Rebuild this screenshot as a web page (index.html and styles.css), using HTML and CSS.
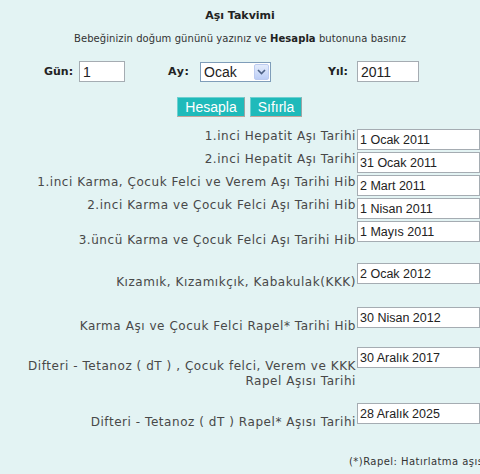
FILE: index.html
```html
<!DOCTYPE html>
<html lang="tr">
<head>
<meta charset="utf-8">
<title>Aşı Takvimi</title>
<link rel="stylesheet" href="styles.css">
</head>
<body>
<div class="page">
  <h1 class="title">Aşı Takvimi</h1>
  <p class="intro">Bebeğinizin doğum gününü yazınız ve <b>Hesapla</b> butonuna basınız</p>

  <div class="fields">
    <label class="field f-gun"><span class="flabel">Gün:</span><input class="txt in-gun" type="text" value="1"></label>
    <label class="field f-ay"><span class="flabel">Ay:</span>
      <span class="selwrap">
        <select class="sel"><option>Ocak</option><option>Şubat</option><option>Mart</option></select>
        <span class="selbtn"><svg width="9" height="6" viewBox="0 0 9 6"><path d="M1 1 L4.5 4.5 L8 1" fill="none" stroke="#4d6185" stroke-width="1.6"/></svg></span>
      </span>
    </label>
    <label class="field f-yil"><span class="flabel">Yıl:</span><input class="txt in-yil" type="text" value="2011"></label>
  </div>

  <div class="buttons">
    <button class="btn btn-h" type="button">Hesapla</button>
    <button class="btn btn-s" type="button">Sıfırla</button>
  </div>

  <div class="results">
    <div class="row r-short"><div class="lbl">1.inci Hepatit Aşı Tarihi</div><input class="out" type="text" value="1 Ocak 2011"></div>
    <div class="row r-short"><div class="lbl">2.inci Hepatit Aşı Tarihi</div><input class="out" type="text" value="31 Ocak 2011"></div>
    <div class="row r-short"><div class="lbl">1.inci Karma, Çocuk Felci ve Verem Aşı Tarihi Hib</div><input class="out" type="text" value="2 Mart 2011"></div>
    <div class="row r-short"><div class="lbl">2.inci Karma ve Çocuk Felci Aşı Tarihi Hib</div><input class="out" type="text" value="1 Nisan 2011"></div>
    <div class="row r-tall h42"><div class="lbl">3.üncü Karma ve Çocuk Felci Aşı Tarihi Hib</div><input class="out" type="text" value="1 Mayıs 2011"></div>
    <div class="row r-tall h44"><div class="lbl">Kızamık, Kızamıkçık, Kabakulak(KKK)</div><input class="out" type="text" value="2 Ocak 2012"></div>
    <div class="row r-tall h40"><div class="lbl">Karma Aşı ve Çocuk Felci Rapel* Tarihi Hib</div><input class="out" type="text" value="30 Nisan 2012"></div>
    <div class="row r-tall h56"><div class="lbl">Difteri - Tetanoz ( dT ) , Çocuk felci, Verem ve KKK<br>Rapel Aşısı Tarihi</div><input class="out" type="text" value="30 Aralık 2017"></div>
    <div class="row r-tall h44"><div class="lbl">Difteri - Tetanoz ( dT ) Rapel* Aşısı Tarihi</div><input class="out" type="text" value="28 Aralık 2025"></div>
  </div>

  <p class="note">(*)Rapel: Hatırlatma aşısı</p>
</div>
</body>
</html>
```

FILE: styles.css
```css
html, body {
  margin: 0;
  padding: 0;
  background: #e3f3f3;
}
body {
  font-family: "DejaVu Sans", Verdana, sans-serif;
  color: #333;
  overflow: hidden;
}
.page {
  width: 480px;
  height: 474px;
  box-sizing: border-box;
  padding-top: 9px;
}
.title {
  margin: 0;
  font-size: 11px;
  line-height: 14px;
  font-weight: bold;
  text-align: center;
  color: #222;
}
.intro {
  margin: 9px 0 0;
  font-size: 10px;
  line-height: 14px;
  text-align: center;
  color: #333;
  letter-spacing: 0.07px;
}
.intro b { color: #222; }
.fields {
  display: flex;
  align-items: center;
  margin-top: 15px;
  height: 21px;
}
.field {
  display: flex;
  align-items: center;
}
.flabel {
  font-size: 11px;
  font-weight: bold;
  color: #222;
  white-space: nowrap;
}
.f-gun { margin-left: 44px; }
.f-gun .flabel { width: 35px; }
.f-ay { margin-left: 43px; }
.f-ay .flabel { width: 32px; letter-spacing: 0.6px; }
.f-yil { margin-left: 57px; }
.f-yil .flabel { width: 29px; }
.txt {
  box-sizing: border-box;
  height: 21px;
  border: 1px solid #a5acb2;
  background: #fff;
  font-family: "Liberation Sans", Arial, sans-serif;
  font-size: 14px;
  color: #222;
  padding: 0 3px;
  margin: 0;
}
.in-gun { width: 46px; }
.in-yil { width: 62px; }
.selwrap {
  position: relative;
  display: inline-block;
  width: 71px;
  height: 20px;
}
.sel {
  appearance: none;
  -webkit-appearance: none;
  box-sizing: border-box;
  width: 71px;
  height: 20px;
  border: 1px solid #7f9db9;
  background: #fff;
  font-family: "Liberation Sans", Arial, sans-serif;
  font-size: 14px;
  color: #222;
  padding: 0 3px;
  margin: 0;
  border-radius: 0;
}
.selbtn {
  position: absolute;
  right: 2px;
  top: 2px;
  width: 15px;
  height: 16px;
  box-sizing: border-box;
  background: linear-gradient(#e4ecfc, #bccef6);
  border: 1px solid #bccbf0;
  border-radius: 2px;
  display: flex;
  align-items: center;
  justify-content: center;
}
.buttons {
  display: flex;
  justify-content: flex-start;
  gap: 5px;
  margin-top: 15px;
  padding-left: 177px;
}
.btn {
  box-sizing: border-box;
  height: 20px;
  margin: 0;
  padding: 0;
  background: #1fbaba;
  color: #fff;
  font-family: "Liberation Sans", Arial, sans-serif;
  font-size: 14px;
  line-height: 18px;
  border: 1px solid #1fbaba;
  border-top-color: #6fd0d0;
  border-left-color: #6fd0d0;
  border-right-color: #9aa5a5;
  border-bottom-color: #c7a59a;
}
.btn-h { width: 68px; }
.btn-s { width: 52px; }
.results {
  margin-top: 12px;
}
.row {
  display: grid;
  grid-template-columns: 357px 123px;
  align-items: start;
}
.r-short { height: 23px; }
.h40 { height: 40px; }
.h42 { height: 42px; }
.h44 { height: 44px; }
.h56 { height: 56px; }
.lbl {
  text-align: right;
  font-size: 12px;
  line-height: 15px;
  color: #484848;
  padding-right: 1px;
  letter-spacing: 0.55px;
  white-space: nowrap;
}
.r-tall .lbl { padding-top: 12px; }
.out {
  box-sizing: border-box;
  width: 123px;
  height: 21px;
  margin: 0;
  border: 1px solid #a5acb2;
  background: #fff;
  font-family: "Liberation Sans", Arial, sans-serif;
  font-size: 12.5px;
  color: #222;
  padding: 1px 2px 0;
}
.note {
  margin: 9px 0 0;
  padding-left: 349px;
  font-size: 10px;
  line-height: 12px;
  color: #333;
  white-space: nowrap;
  letter-spacing: 0.45px;
}
```
